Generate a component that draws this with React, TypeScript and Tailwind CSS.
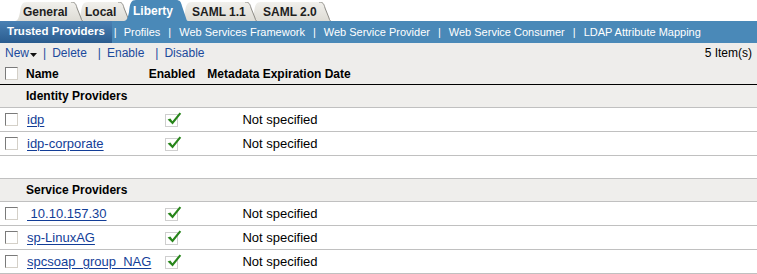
import React from "react";

type Tab = { label: string; w: number; ml: number; pl: number; z: string; active?: boolean };

const tabs: Tab[] = [
  { label: "General", w: 68, ml: 15, pl: 8, z: "z-[5]" },
  { label: "Local", w: 54, ml: -7, pl: 9, z: "z-[4]" },
  { label: "Liberty", w: 64, ml: -6, pl: 9, z: "z-[10]", active: true },
  { label: "SAML 1.1", w: 77, ml: -8, pl: 12, z: "z-[3]" },
  { label: "SAML 2.0", w: 82, ml: -8, pl: 14, z: "z-[2]" },
];

const navItems = [
  "Profiles",
  "Web Services Framework",
  "Web Service Provider",
  "Web Service Consumer",
  "LDAP Attribute Mapping",
];

const groups = [
  { title: "Identity Providers", rows: ["idp", "idp-corporate"] },
  { title: "Service Providers", rows: ["\u00a010.10.157.30", "sp-LinuxAG", "spcsoap_group_NAG"] },
];

function TabShape({ w, h, active }: { w: number; h: number; active?: boolean }) {
  const body = `M0 ${h} C3 ${h} 4 ${h - 4} 5 ${h - 9} C6 3 7 0 12 0 L${w - 12} 0 C${w - 8} 0 ${w - 7} 2 ${w - 6} 6 L${w - 2} ${h - 3} C${w - 1.5} ${h - 1} ${w - 1} ${h} ${w} ${h} Z`;
  const edge = `M${w - 12} 0 C${w - 8} 0 ${w - 7} 2 ${w - 6} 6 L${w - 2} ${h - 3} C${w - 1.5} ${h - 1} ${w - 1} ${h} ${w} ${h}`;
  return (
    <svg className="absolute inset-0" width={w} height={h} viewBox={`0 0 ${w} ${h}`}>
      <defs>
        <linearGradient id="tabg" x1="0" y1="0" x2="0" y2="1">
          <stop offset="0" stopColor="#f1f0ec" />
          <stop offset="1" stopColor="#dedcd5" />
        </linearGradient>
      </defs>
      <path d={body} fill={active ? "#4a89b8" : "url(#tabg)"} />
      {!active && <path d={edge} fill="none" stroke="#8c8a84" strokeWidth="1" />}
    </svg>
  );
}

function Checkbox() {
  return (
    <div className="w-[13px] h-[13px] bg-white border border-t-[#7a7a7a] border-l-[#7a7a7a] border-r-[#d4d0c8] border-b-[#d4d0c8]" />
  );
}

function EnabledIcon() {
  return (
    <svg width="18" height="16" viewBox="0 0 18 16">
      <rect x="1.5" y="3.5" width="12" height="12" fill="#fff" stroke="#cfcfcf" />
      <path d="M3.6 8.6 L6.4 7.4 L8.4 10.2 L15.6 1.4 L17.2 2.8 L8.6 13.6 Z" fill="#27851a" />
    </svg>
  );
}

export default function App() {
  return (
    <div className="w-[757px] h-[274px] overflow-hidden bg-white font-['Liberation_Sans',Arial,sans-serif]">
      {/* tabs */}
      <div className="flex items-end h-[21px]">
        {tabs.map((t) => {
          const h = t.active ? 21 : 19;
          return (
            <div
              key={t.label}
              className={`relative ${t.z} flex items-center shrink-0`}
              style={{ width: t.w, height: h, marginLeft: t.ml }}
            >
              <TabShape w={t.w} h={h} active={t.active} />
              <span
                className={`relative text-[12px] font-bold ${t.active ? "text-white" : "text-[#1e1e1e]"}`}
                style={{ paddingLeft: t.pl }}
              >
                {t.label}
              </span>
            </div>
          );
        })}
      </div>

      {/* sub nav */}
      <div className="flex items-center h-[22px] bg-[#4a89b8] text-white text-[11px]">
        <div className="h-full flex items-center px-[7px] bg-gradient-to-b from-[#4a81b4] to-[#2a5c8f] font-bold text-[11.5px]">
          Trusted Providers
        </div>
        {navItems.map((n, i) => (
          <React.Fragment key={n}>
            <span className={i === 0 ? "ml-[2px] mr-[7px]" : "mx-[8px]"}>|</span>
            <span>{n}</span>
          </React.Fragment>
        ))}
      </div>

      {/* toolbar */}
      <div className="flex items-center h-[20px] bg-[#eeedeb] text-[12px] text-[#1b4a9c] pl-[5px] pr-[5px]">
        <span>New</span>
        <svg width="7" height="4" viewBox="0 0 7 4" className="mt-[3px] ml-[1px]">
          <path d="M0 0 H7 L3.5 4 Z" fill="#111" />
        </svg>
        <span className="ml-[6px] mr-[6px]">|</span>
        <span>Delete</span>
        <span className="ml-[11px] mr-[6px]">|</span>
        <span>Enable</span>
        <span className="ml-[11px] mr-[6px]">|</span>
        <span>Disable</span>
        <span className="ml-auto text-black">5 Item(s)</span>
      </div>

      {/* header */}
      <div className="grid grid-cols-[22px_118px_64px_150px_1fr] items-center h-[22px] bg-[#eeedeb] border-b border-black text-[12px] font-bold text-black">
        <div className="pl-[5px]">
          <Checkbox />
        </div>
        <div className="pl-[4px]">Name</div>
        <div className="text-center">Enabled</div>
        <div className="text-center whitespace-nowrap">Metadata Expiration Date</div>
        <div />
      </div>

      {groups.map((g, gi) => (
        <div key={g.title}>
          {gi > 0 && <div className="h-[23px] border-b border-[#c0c0c0] bg-white" />}
          <div className="h-[23px] flex items-center bg-[#efeeec] border-b border-[#c0c0c0] pl-[26px] text-[12px] font-bold text-black">
            {g.title}
          </div>
          {g.rows.map((r) => (
            <div
              key={r}
              className="grid grid-cols-[22px_118px_64px_150px_1fr] items-center h-[24px] border-b border-[#c0c0c0] text-[13px] text-black"
            >
              <div className="pl-[5px]">
                <Checkbox />
              </div>
              <div className="pl-[5px]">
                <a className="text-[#123d97] underline underline-offset-[2px] whitespace-pre">{r}</a>
              </div>
              <div className="flex justify-center pl-[2px] -mt-[2px]">
                <EnabledIcon />
              </div>
              <div className="text-center pl-[2px]">Not specified</div>
              <div />
            </div>
          ))}
        </div>
      ))}
    </div>
  );
}
